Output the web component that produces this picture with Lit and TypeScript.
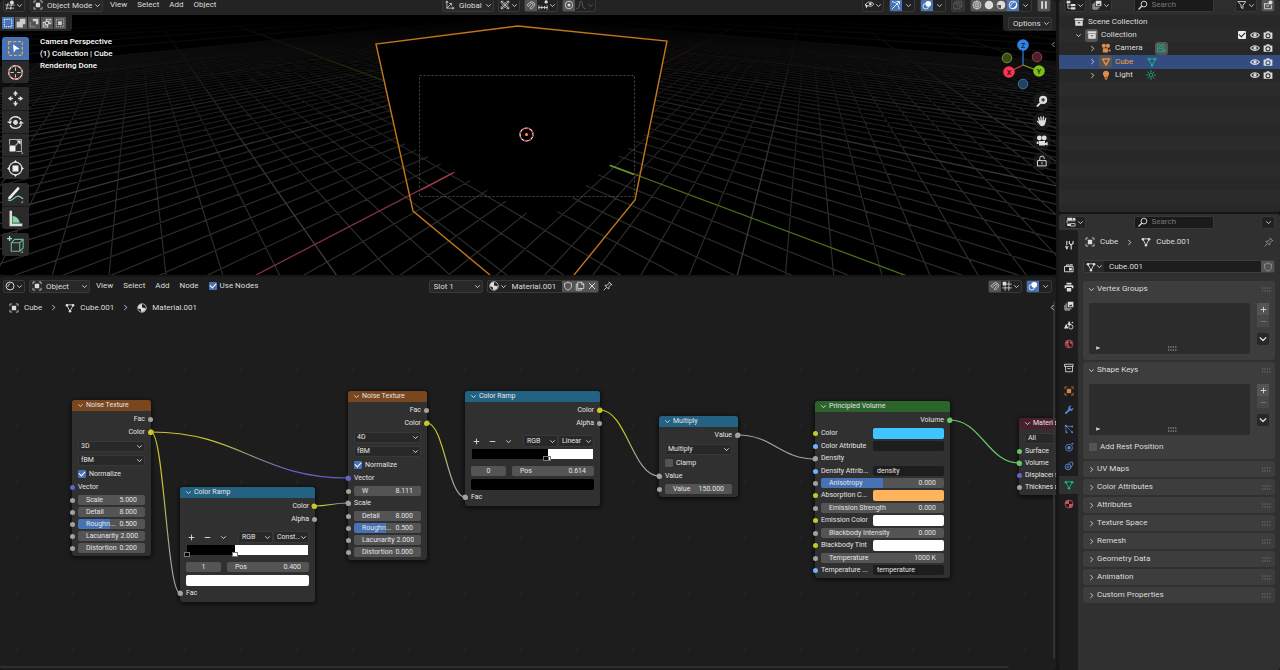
import { LitElement, html, svg, css, TemplateResult } from "lit";
import { customElement, property } from "lit/decorators.js";
import { classMap } from "lit/directives/class-map.js";

/* ---------- icons, drawn on a 16 x 16 grid ---------- */
const ln = (d: string, w = 1.4) =>
  svg`<path d=${d} fill="none" stroke="currentColor" stroke-width=${w} stroke-linecap="round" stroke-linejoin="round"></path>`;
const fl = (d: string) => svg`<path d=${d} fill="currentColor" fill-rule="evenodd"></path>`;
const ring = (x: number, y: number, r: number, w = 1.4) =>
  svg`<circle cx=${x} cy=${y} r=${r} fill="none" stroke="currentColor" stroke-width=${w}></circle>`;
const dot = (x: number, y: number, r: number) => svg`<circle cx=${x} cy=${y} r=${r} fill="currentColor"></circle>`;

const corners = ln("M1.5 4.5v-3h3M11.5 1.5h3v3M14.5 11.5v3h-3M4.5 14.5h-3v-3", 1.2);

const ICONS: Record<string, unknown> = {
  chev: ln("M3.500 6l4.500 4.500L12.500 6", 2),
  right: ln("M6 3l5 5-5 5", 2),
  left: ln("M10 3L5 8l5 5", 2),
  plus: ln("M8 2.500v11M2.500 8h11", 2),
  minus: ln("M2.500 8h11", 2),
  x: ln("M3.500 3.500l9 9M12.500 3.500l-9 9", 1.6),
  search: svg`${ring(9.5, 6.5, 4.6, 1.5)}${ln("M6 10l-4.500 4.500", 2)}`,
  viewport: svg`${ln("M1 8h14M3 13h11M5 5L2 15M10 8l-1 7", 1.3)}${dot(11, 4, 3.2)}`,
  object: svg`${corners}${fl("M4.500 4.500h7v7h-7z")}`,
  axes: svg`${ln("M3 2v11h11M3 13l7-7M1.500 4L3 1.500 4.500 4M12 11.500l2.500 1.500-2.500 1.500M7.500 5.500H10.500V8.500", 1.2)}`,
  pivot: svg`${ln("M2 2l3 3M14 2l-3 3M2 14l3-3M14 14l-3-3M2 5V2h3M11 2h3v3M2 11v3h3M11 14h3v-3", 1.2)}${ring(8, 8, 3.6, 1.3)}${dot(8, 8, 1.6)}`,
  magnet: svg`${ln("M2 8l4-4a4.600 4.600 0 0 1 6.500 6.500l-4 4-2-2 4-4a1.700 1.700 0 0 0-2.500-2.500l-4 4z", 1.3)}`,
  increment: svg`${ln("M1 12h14M1.500 9v6M6 10v4M10.500 10v4M14.500 9v6", 1.3)}${dot(13, 3, 2.6)}`,
  prop: svg`${ring(8, 8, 6, 1.3)}${dot(8, 8, 2.4)}`,
  falloff: ln("M1.500 14C7 14 5 2 8 2s1 12 6.500 12", 1.4),
  eyecur: svg`${ln("M3 6.500C5 2 13 2 15.500 6.500 13 11 9 10.500 7.500 9.500", 1.4)}${dot(10, 6.5, 2.2)}${fl("M1 6l7 3.500-3 1L4 14z")}`,
  gizmo: svg`${ln("M2 3c6 0 10 4 11 11M2 14L13 3M9.500 2.500H13.500V6.500", 1.4)}`,
  overlay: svg`${ring(6, 10, 4.4, 1.3)}${dot(10, 6, 4.6)}`,
  xray: svg`${ln("M2 5h9v9H2zM5 5V2h9v9h-3M7 7v4", 1.2)}`,
  wire: svg`${ring(8, 8, 6.3, 1.2)}${ln("M8 1.700v12.600M1.700 8h12.600M3 4.500c3 1.500 7 1.500 10 0M3 11.500c3-1.500 7-1.500 10 0M8 1.700C4 5 4 11 8 14.300M8 1.700c4 3.300 4 9.300 0 12.600", 0.9)}`,
  solid: dot(8, 8, 6.8),
  material: svg`${ring(8, 8, 6.3, 1.2)}${fl("M8 1.500a6.500 6.500 0 0 1 0 13V8H2a6 6 0 0 1 6-6.500z")}`,
  rendered: svg`${ring(8, 8, 6.2, 1.4)}${ln("M4.500 9.500A5 5 0 0 1 9.500 4", 1.3)}${fl("M13.500 4A7 7 0 0 1 4 13.500 9 9 0 0 0 13.500 4z")}`,
  pause: fl("M3.500 2h3v12h-3zM9.500 2h3v12h-3z"),
  shaderball: svg`${ring(8, 8, 6.4, 1.5)}${ln("M4.500 9A4.500 4.500 0 0 1 8 4.500", 1.3)}`,
  matball: svg`${ring(8, 8, 6.8, 1.2)}${fl("M8 1.500A6.500 6.500 0 0 0 1.500 8.500L6 10l2-3zM8 7l6 1.500A6.500 6.500 0 0 1 7 14.500L6 10z")}`,
  mesh: svg`${ln("M3 3.500L8 13.500 13 3.500z", 1.4)}${dot(3, 3.5, 2)}${dot(13, 3.5, 2)}${dot(8, 13.2, 2)}`,
  shield: ln("M8 2c2 1.200 4 1.500 5.500 1.500V8c0 3.500-3 5.500-5.500 6.500C5.500 13.500 2.500 11.500 2.500 8V3.500C4 3.500 6 3.200 8 2z", 1.3),
  copy: ln("M5 2h6l3 3v7H5zM10.500 2v3.500H14M4.500 5H2v9.500h8V12.500", 1.3),
  pin: ln("M9.500 1.500l5 5M10.500 2.500L7 6.500 3 7l6 6 .5-4 4-3.500M5.500 10.500l-4 4", 1.3),
  gridsnap: svg`${ln("M8 5h7M1 11h14M11 1v14M5 8v7", 1.3)}${fl("M1 1h6v6H1z")}`,
  tree: svg`${fl("M1 1h6v4H1zM8 6.500h7v3.500H8zM8 11.500h7V15H8z")}${ln("M3 5v8.200h5M3 8.200h5", 1.2)}`,
  layers: svg`${ln("M3.500 4.500V12.500H11.500M1.500 7v7.500H9", 1.3)}${fl("M6 1h9v9H6zM7.500 8.500h6L11.500 5 9.800 7.200 9 6.200z")}`,
  filter: ln("M2 2.500h12L9.500 8.500v5l-3-1.500V8.500z", 1.4),
  newcol: svg`${ln("M2 6h7M2.500 6v8h11V9M6 9.500h3", 1.4)}${dot(12, 4, 3.2)}`,
  archive: svg`${fl("M1 2h14v3.500H1zM2 6.500h12V14H2zM6 8.500v1.500h4V8.500z")}`,
  archiveline: ln("M1.500 2h13v3.500h-13zM2.500 5.500V14h11V5.500M6 9h4", 1.4),
  camobj: svg`${dot(4.5, 4.5, 3.4)}${dot(11, 4.5, 3.4)}${fl("M3 8.500h8V15H3zM11.500 11.500L15 9.500v5l-3.500-2z")}`,
  camline: svg`${ring(4.5, 4.5, 2.5, 1.3)}${ring(11, 4.5, 2.5, 1.3)}${ln("M3 9h8v5H3zM11 11.500L14.500 9.500v4.500z", 1.3)}`,
  tri: ln("M2.500 3L8 13 13.500 3z", 2.4),
  bulb: svg`${fl("M8 1a5 5 0 0 1 3 9v2H5v-2A5 5 0 0 1 8 1zM5.500 13h5L9 15.500H7z")}`,
  sun: svg`${ring(8, 8, 3, 1.3)}${ln("M8 1v2M8 13v2M1 8h2M13 8h2M3 3l1.500 1.500M11.500 11.500L13 13M13 3l-1.500 1.500M3 13l1.500-1.500", 1.4)}`,
  eye: svg`${ln("M1 8C3.500 3 12.500 3 15 8 12.500 13 3.500 13 1 8z", 1.7)}${dot(8, 8, 2.7)}`,
  render: svg`${fl("M1 4h4l1-2h4l1 2h4v10H1zM8 5a4 4 0 1 0 0 8 4 4 0 0 0 0-8z")}${dot(8, 9, 2.4)}`,
  props: svg`${fl("M2 1h8v4H2zM2 10.500h5V14.500H2z")}${ln("M11 3h3.500v3H1.500V9M8 10.500h6.500v4H8z", 1.3)}${dot(13, 3, 2)}`,
  tool: svg`${ln("M4.500 2V7M4.500 9.500V14M11.500 8.500V14.500M8.500 2v3.500l3 2.500 3-2.500V2", 1.8)}${ln("M2.500 10.500l2 4 2-4", 1.4)}`,
  rendertab: svg`${ln("M1.500 5.500h13V14h-13zM4 5V3h4v2", 1.5)}${fl("M8 7.500h4.500V12H8zM9 2h5v2H9z")}`,
  output: svg`${fl("M4 1h8v3H4zM1 5h14v5h-2.500V8h-9v2H1zM4.500 9.500h7V15h-7z")}`,
  scene: svg`${fl("M8 1l3.500 7h-6zM3.500 6L7 13.500H0z")}${ring(11, 11, 3.4, 1.4)}${dot(13.5, 4, 1.3)}`,
  world: svg`${ring(8, 8, 6.3, 1.3)}${fl("M3 4l4-1.500 1 3L6 8l3 3-1 3-3-3-2-3zM10 3l3 2-1 4-3-3z")}`,
  wrench: svg`${ln("M3 13L9.500 6.500", 3)}${fl("M15 4.500l-3 2-2-.5-.5-2L12 1a4.500 4.500 0 0 0-5 5.700L9.500 9.200a4.500 4.500 0 0 0 5.500-4.700z")}`,
  particles: svg`${dot(3, 3, 1.8)}${dot(13, 4, 1.6)}${dot(4, 13, 1.6)}${dot(13, 13, 1.6)}${ln("M3 3v9M4 4l8.500 8.500M4.500 3.500L12 4", 1.2)}`,
  physics: svg`${ring(8, 9, 5.6, 1.3)}${dot(8, 9, 2.8)}${dot(13.5, 2.5, 1.5)}`,
  constraint: svg`${ring(6.5, 9.5, 4.6, 1.5)}${ring(6.5, 9.5, 1.6, 1.3)}${ln("M7 4.500l3.500-2.500h3.500v4l-3 4.500", 1.5)}`,
  matred: svg`${ring(8, 8, 6.3, 1.3)}${fl("M8 1.500A6.500 6.500 0 0 0 1.500 8H8v6.500A6.500 6.500 0 0 0 14.500 8H8z")}`,
  play: fl("M3 3.500l12 4.500-12 4.500z"),
  zoom: svg`${dot(9.5, 6.5, 5.4)}${ln("M6 10.500L2 14.500", 2.6)}<path d="M9.500 4v5M7 6.500h5" stroke="#111" stroke-width="1.300"></path>`,
  hand: svg`${ln("M4.500 8L3.500 4M7 7L6.500 2.500M9.500 7l.5-4.500M12 8l1-3.500M2 8.500l3 3", 1.8)}${fl("M4 7h9c0 4-1.500 8-5 8-2 0-3-1.500-4-4z")}`,
  cam: svg`${dot(4.5, 4, 3.2)}${dot(11, 4, 3.2)}${fl("M4 8h8v6H4zM12 11l3.500-2v5L12 13zM1 8.500h2.500V12H1z")}`,
  lock: svg`${ln("M2.500 7.500h11v7h-11zM5 7.500V4.500a3 3 0 0 1 6 0V5", 1.3)}${ln("M8 10v2", 1.3)}`,
};

const icon = (name: string, cls = ""): TemplateResult =>
  html`<svg class="ic ${cls}" viewBox="0 0 16 16" aria-hidden="true">${ICONS[name]}</svg>`;

const grip = html`<svg class="grip" viewBox="0 0 9 5" aria-hidden="true"><path d="M0 1h9M0 4h9" fill="none" stroke="currentColor" stroke-dasharray="1.200 1.200"></path></svg>`;

/* ---------- styles shared by every element ---------- */
const base = css`
  * { box-sizing: border-box; }
  button, input, select { font: inherit; color: inherit; margin: 0; padding: 0; border: 0; background: none; border-radius: 0; }
  select { appearance: none; outline: 0; }
  button { display: inline-flex; align-items: center; justify-content: center; }
  .ic { width: 10px; height: 10px; flex: none; display: block; overflow: visible; }
  .ic.s { width: 7px; height: 7px; }
  .ic.l { width: 12px; height: 12px; }
  .row { display: flex; align-items: center; }
  .grp { display: flex; align-items: center; height: 13px; border: 1px solid #383838; border-radius: 2px; background: #222; overflow: hidden; flex: none; }
  .grp > button { height: 12px; width: 12px; }
  .grp > button.wide { width: 20px; gap: 1px; }
  .on { background: #4772b3; color: #fff; }
  .grey { background: #545454; }
  .dim { opacity: 0.35; }
  .pick { display: flex; align-items: center; height: 13px; border: 1px solid #383838; border-radius: 2px; background: #282828; padding: 0 1px 0 2px; flex: none; }
  .pick > .ic:first-child { margin-right: 4px; }
  .pick select { flex: 1; min-width: 0; height: 100%; }
  .check { display: inline-flex; align-items: center; gap: 3px; }
  .check input { appearance: none; width: 8px; height: 8px; border-radius: 1px; background: #545454; flex: none; display: grid; place-items: center; }
  .check input:checked { background: #4772b3; }
  .check input:checked::after { content: ""; width: 5px; height: 3px; border-left: 1px solid #fff; border-bottom: 1px solid #fff; rotate: -45deg; translate: 0 -1px; }
`;

const pick = (value: string, label: string, ic = "", cls = "") => html`
  <label class="pick ${cls}">${ic ? icon(ic) : ""}<select aria-label=${label}><option>${value}</option></select>${icon("chev", "s")}</label>`;

/* ---------- perspective scene behind the 3D viewport ---------- */
@customElement("viewport-scene")
export class ViewportScene extends LitElement {
  static styles = css`
    :host { display: block; position: absolute; inset: 0; }
    svg { display: block; width: 100%; height: 100%; }
  `;

  private readonly focal = 298;
  private readonly dist = 15.94;
  private readonly a = 0.6465;
  private readonly b = 0.763;
  private readonly sinE = 0.439;
  private readonly cosE = 0.8985;

  private project(x: number, y: number): [number, number] {
    const depth = this.dist - this.cosE * (this.b * x + this.a * y);
    const sx = 527 + (this.focal * (this.b * y - this.a * x)) / depth;
    const sy = 134.6 + (this.focal * this.sinE * (this.b * x + this.a * y)) / depth;
    return [+sx.toFixed(1), +sy.toFixed(1)];
  }

  private gridPath(filter: (i: number) => boolean, range: number): string {
    let d = "";
    const near = this.dist - 1;
    for (let i = -range; i <= range; i++) {
      if (!filter(i)) continue;
      const yMax = Math.min(range, (near / this.cosE - this.b * i) / this.a);
      const xMax = Math.min(range, (near / this.cosE - this.a * i) / this.b);
      if (yMax > -range) d += `M${this.project(i, -range)}L${this.project(i, yMax)}`;
      if (xMax > -range) d += `M${this.project(-range, i)}L${this.project(xMax, i)}`;
    }
    return d;
  }

  render() {
    const minor = this.gridPath((i) => i % 10 !== 0, 50);
    const major = this.gridPath((i) => i % 10 === 0 && i !== 0, 100);
    return html`<svg viewBox="0 15 1056 260" preserveAspectRatio="xMidYMin slice" aria-hidden="true">
      <defs>
        <linearGradient id="fade" gradientUnits="userSpaceOnUse" x1="0" y1="18" x2="0" y2="275">
          <stop offset="0" stop-color="#000"></stop>
          <stop offset="0.12" stop-color="#3a3a3a"></stop>
          <stop offset="0.35" stop-color="#a0a0a0"></stop>
          <stop offset="0.7" stop-color="#fff"></stop>
        </linearGradient>
        <mask id="haze" maskUnits="userSpaceOnUse" x="0" y="15" width="1056" height="260">
          <rect x="0" y="15" width="1056" height="260" fill="url(#fade)"></rect>
        </mask>
      </defs>
      <rect y="15" width="1056" height="260" fill="#000"></rect>
      <g mask="url(#haze)" fill="none">
        <path d=${minor} stroke="#2c2c2c" stroke-width="1.200"></path>
        <path d=${major} stroke="#3c3c3c" stroke-width="1.300"></path>
        <path d="M256 275L740 24" stroke="#84303f" stroke-width="1.300"></path>
        <path d="M232 24L907 276" stroke="#4b6e1c" stroke-width="1.300"></path>
      </g>
      <path d="M376 44L518 26 667 41 649 130 544 223 397 139z" fill="#000"></path>
      <path d="M453 173L421 190" stroke="#a43b4e" stroke-width="1.400"></path>
      <path d="M610 165.500L634 174.500" stroke="#6b9424" stroke-width="1.400"></path>
      <path d="M490 275L413 211 376 44 518 26 667 41 635 200 574 275" fill="none" stroke="#c2761a" stroke-width="1.400"></path>
      <rect x="419.500" y="75.500" width="215" height="121" fill="none" stroke="#4a4a4a" stroke-dasharray="2 2"></rect>
      <circle cx="526.500" cy="134.500" r="6.500" fill="none" stroke="#fff" stroke-width="1.200"></circle>
      <circle cx="526.500" cy="134.500" r="6.500" fill="none" stroke="#d22" stroke-width="1.200" stroke-dasharray="2.550 2.550"></circle>
      <circle cx="526.500" cy="134.500" r="1.500" fill="#ff9a2e"></circle>
    </svg>`;
  }
}

/* ---------- shader nodes ---------- */
type Row = {
  kind: "out" | "plain" | "select" | "check" | "num" | "swatch" | "text" | "ramp";
  label?: string;
  value?: string;
  sock?: string;
  fill?: number;
  on?: boolean;
  mode?: string;
  index?: string;
  pos?: string;
  stops?: number[];
};
type NodeData = { title: string; x: number; y: number; w: number; head: string; tight?: boolean; rows: Row[] };

const G = "#a1a1a1", Y = "#c7c729", V = "#6363c7", S = "#70b2ff", SH = "#63c763";

const noise = (x: number, y: number, dim: string, tail: Row[]): NodeData => ({
  title: "Noise Texture", x, y, w: 79, head: "#79461d",
  rows: [
    { kind: "out", label: "Fac", sock: G },
    { kind: "out", label: "Color", sock: Y },
    { kind: "select", value: dim, label: "Dimensions" },
    { kind: "select", value: "fBM", label: "Type" },
    { kind: "check", label: "Normalize", on: true },
    { kind: "plain", label: "Vector", sock: V },
    ...tail,
  ],
});
const num = (label: string, value: string, fill?: number): Row => ({ kind: "num", label, value, sock: G, fill });
const ramp = (x: number, y: number, mode: string, index: string, pos: string, stops: number[], value: string): NodeData => ({
  title: "Color Ramp", x, y, w: 135, head: "#246283",
  rows: [
    { kind: "out", label: "Color", sock: Y },
    { kind: "out", label: "Alpha", sock: G },
    { kind: "ramp", mode, index, pos, stops, value },
    { kind: "plain", label: "Fac", sock: G },
  ],
});

const NODES: NodeData[] = [
  noise(72, 80, "3D", [num("Scale", "5.000"), num("Detail", "8.000"), num("Roughn...", "0.500", 48), num("Lacunarity", "2.000"), num("Distortion", "0.200")]),
  ramp(180, 167, "Const...", "1", "0.400", [0, 40], "#ffffff"),
  noise(348, 71, "4D", [num("W", "8.111"), { kind: "plain", label: "Scale", sock: G }, num("Detail", "8.000"), num("Roughn...", "0.500", 48), num("Lacunarity", "2.000"), num("Distortion", "0.000")]),
  ramp(465, 71, "Linear", "0", "0.614", [61, 63], "#000000"),
  {
    title: "Multiply", x: 659, y: 96, w: 79, head: "#246283",
    rows: [
      { kind: "out", label: "Value", sock: G },
      { kind: "select", value: "Multiply", label: "Operation" },
      { kind: "check", label: "Clamp", on: false },
      { kind: "plain", label: "Value", sock: G },
      num("Value", "150.000"),
    ],
  },
  {
    title: "Principled Volume", x: 815, y: 81, w: 135, head: "#2b652b",
    rows: [
      { kind: "out", label: "Volume", sock: SH },
      { kind: "swatch", label: "Color", value: "#40c4ff", sock: Y },
      { kind: "text", label: "Color Attribute", value: "", sock: S },
      { kind: "plain", label: "Density", sock: G },
      { kind: "text", label: "Density Attrib...", value: "density", sock: S },
      num("Anisotropy", "0.000", 50),
      { kind: "swatch", label: "Absorption C...", value: "#ffb35c", sock: Y },
      num("Emission Strength", "0.000"),
      { kind: "swatch", label: "Emission Color", value: "#ffffff", sock: Y },
      num("Blackbody Intensity", "0.000"),
      { kind: "swatch", label: "Blackbody Tint", value: "#ffffff", sock: Y },
      num("Temperature", "1000 K"),
      { kind: "text", label: "Temperature ...", value: "temperature", sock: S },
    ],
  },
  {
    title: "Material Output", x: 1019, y: 98, w: 79, head: "#4a1f2c", tight: true,
    rows: [
      { kind: "select", value: "All", label: "Target" },
      { kind: "plain", label: "Surface", sock: SH },
      { kind: "plain", label: "Volume", sock: SH },
      { kind: "plain", label: "Displacement", sock: V },
      { kind: "plain", label: "Thickness", sock: G },
    ],
  },
];

@customElement("shader-node")
export class ShaderNode extends LitElement {
  @property({ attribute: false }) data!: NodeData;

  static styles = [base, css`
    :host { display: block; }
    .node { background: #303030; border-radius: 3px; box-shadow: 0 1px 4px 1px rgba(0, 0, 0, 0.6); font-size: 7px; line-height: 9px; color: #e4e4e4; }
    .head { height: 11px; padding: 0 5px; gap: 2px; border-radius: 3px 3px 0 0; overflow: hidden; white-space: nowrap; }
    .body { padding: 2px 0; }
    .r { position: relative; display: flex; align-items: center; height: 12px; padding: 0 6px; white-space: nowrap; }
    .out, .plain, .swatch { height: 13px; }
    .tight .plain { height: 12px; }
    .out { justify-content: flex-end; }
    .select, .check-row { height: 14px; }
    .sock { position: absolute; width: 5px; height: 5px; border-radius: 50%; left: -2px; }
    .out .sock { left: auto; right: -2px; }
    .r .pick { flex: 1; height: 11px; }
    .num label { flex: 1; min-width: 0; display: flex; align-items: center; justify-content: space-between; height: 10px; border-radius: 2px; padding: 0 8px; background: linear-gradient(90deg, #4772b3 var(--fill, 0%), #545454 0); }
    .num input { text-align: right; flex: none; }
    .pair { flex: 1; min-width: 0; display: grid; grid-template-columns: 52px 1fr; align-items: center; }
    .pair input { width: 100%; height: 10px; border-radius: 2px; background: #1d1d1d; padding: 0 4px; }
    .chip { display: flex; height: 11px; border-radius: 2px; width: 100%; }
    .ramp { padding: 4px 6px 1px; }
    .tools { height: 14px; gap: 8px; padding-left: 1px; }
    .tools button { width: 8px; height: 10px; }
    .tools .duo { display: grid; grid-template-columns: 35px 36px; margin-left: auto; }
    .tools .pick { padding: 0 1px 0 3px; height: 12px; }
    .bar { position: relative; height: 12px; margin: 1px 1px 0; }
    .grad { height: 10px; display: flex; background: #000; }
    .grad i { margin-left: auto; background: #fff; }
    .stop { position: absolute; bottom: 0; width: 6px; height: 5px; margin-left: -3px; border: 1px solid #777; background: #000; }
    .stop.w { background: #fff; }
    .stop:not(.w) { z-index: 1; }
    .fields { margin-top: 5px; gap: 6px; }
    .fields label { display: flex; align-items: center; justify-content: space-between; height: 10px; border-radius: 2px; background: #545454; padding: 0 8px; flex: 1; min-width: 0; }
    .fields label.idx { flex: none; width: 35px; padding: 0; }
    .fields input { width: 30px; min-width: 0; text-align: right; }
    .fields .idx input { width: 100%; text-align: center; }
    .ramp .chip { margin-top: 3px; }
  `];

  private row(r: Row): TemplateResult {
    const sock = r.sock ? html`<i class="sock" style="background:${r.sock}"></i>` : "";
    switch (r.kind) {
      case "out":
        return html`<div class="r out">${r.label}${sock}</div>`;
      case "plain":
        return html`<div class="r plain">${sock}${r.label}</div>`;
      case "select":
        return html`<div class="r select">${pick(r.value!, r.label!)}</div>`;
      case "check":
        return html`<div class="r check-row"><label class="check"><input type="checkbox" .checked=${!!r.on} />${r.label}</label></div>`;
      case "num":
        return html`<div class="r num">${sock}<label style="--fill:${r.fill ?? 0}%"><span>${r.label}</span><input style="width:${r.value!.length}ch" .value=${r.value!} /></label></div>`;
      case "swatch":
        return html`<div class="r swatch">${sock}<div class="pair"><span>${r.label}</span><button class="chip" aria-label=${r.label!} style="background:${r.value}"></button></div></div>`;
      case "text":
        return html`<div class="r">${sock}<label class="pair"><span>${r.label}</span><input .value=${r.value!} /></label></div>`;
      default:
        return html`<div class="ramp">
          <div class="row tools">
            <button aria-label="Add stop">${icon("plus", "s")}</button>
            <button aria-label="Delete stop">${icon("minus", "s")}</button>
            <button aria-label="Ramp tools">${icon("chev", "s")}</button>
            <div class="duo">${pick("RGB", "Color mode")}${pick(r.mode!, "Interpolation")}</div>
          </div>
          <div class="bar">
            <div class="grad"><i style="width:${100 - r.stops![1]}%"></i></div>
            ${r.stops!.map((s, i) => html`<i class="stop ${i ? "w" : ""}" style="left:${s}%"></i>`)}
          </div>
          <div class="row fields">
            <label class="idx"><input aria-label="Stop" .value=${r.index!} /></label>
            <label><span>Pos</span><input .value=${r.pos!} /></label>
          </div>
          <button class="chip" aria-label="Stop color" style="background:${r.value}"></button>
        </div>`;
    }
  }

  render() {
    const n = this.data;
    return html`<div class=${classMap({ node: true, tight: !!n.tight })}>
      <div class="row head" style="background:${n.head}">${icon("chev", "s")}<span>${n.title}</span></div>
      <div class="body">${n.rows.map((r) => this.row(r))}</div>
    </div>`;
  }
}

type Wire = [number, number, number, number, string, string];
const WIRES: Wire[] = [
  [151, 112, 348, 158, Y, V],
  [151, 112, 180, 273, Y, G],
  [314, 186, 348, 183, Y, G],
  [427, 103, 465, 177, Y, G],
  [600, 90, 659, 156, Y, G],
  [738, 115, 815, 139, G, G],
  [950, 100, 1019, 143, SH, SH],
];

/* ---------- application ---------- */
@customElement("app-root")
export class AppRoot extends LitElement {
  static styles = [base, css`
    :host { display: grid; grid-template-columns: minmax(0, 1fr) 221px; column-gap: 3px; height: 100vh; overflow: hidden; background: #161616; color: #dcdcdc; font: 400 8px/12px Roboto, "Liberation Sans", sans-serif; }
    main { display: grid; grid-template-rows: 275px minmax(0, 1fr); row-gap: 2px; min-width: 0; }
    aside { display: grid; grid-template-rows: 212px minmax(0, 1fr); row-gap: 2px; min-width: 0; }
    section { display: flex; flex-direction: column; min-width: 0; min-height: 0; overflow: hidden; border-radius: 3px; }

    .view { background: #000; }
    .bar { background: #232323; height: 20px; margin-top: -5px; padding: 0 5px 0 3px; display: grid; grid-template-columns: 1fr auto 1fr; align-items: center; flex: none; }
    .bar > div { gap: 5px; }
    .end { justify-content: flex-end; }
    .bar .mid { gap: 4px; padding-right: 16px; }
    .menus { gap: 10px; padding-left: 2px; }
    a { color: inherit; text-decoration: none; }
    .mode { width: 73px; }
    .global { width: 52px; }
    .stage { position: relative; flex: 1; min-height: 0; }
    .corner { position: absolute; top: 0; left: 0; height: 16px; background: #232323; padding: 0 5px 0 2px; border-radius: 0 0 3px 0; }
    .corner.opt { left: auto; right: 0; padding: 0 4px 0 5px; border-radius: 0 0 0 3px; }
    .corner .pick { width: 44px; padding-left: 4px; }
    .selset { display: flex; }
    .selset button { width: 12px; height: 12px; background: #545454; margin-right: 1px; color: #ccc; }
    .selset button.on { background: #4772b3; color: #fff; }
    .tools { position: absolute; left: 2px; top: 22px; width: 27px; display: grid; gap: 4px; }
    .tools div { display: grid; border-radius: 3px; overflow: hidden; }
    .tools button { width: 100%; height: 23px; background: #2a2a2a; color: #ddd; }
    .tools button + button { border-top: 1px solid #1a1a1a; }
    .tools button.on { background: #4772b3; }
    .tools svg { width: 17px; height: 17px; display: block; }
    .info { position: absolute; left: 40px; top: 21px; color: #fff; font-weight: 500; }
    .info div { height: 12px; }
    .giz { position: absolute; right: 11px; top: 24px; width: 46px; height: 52px; }
    .giz text { font-size: 7px; font-weight: 700; text-anchor: middle; }
    .nav { position: absolute; right: 5px; top: 77px; display: grid; gap: 2px; color: #ddd; }
    .nav button { width: 18px; height: 18px; border-radius: 50%; background: rgba(30, 30, 30, 0.7); }
    .tog { position: absolute; right: -1px; top: 26px; color: #aaa; }

    .nodes { background: #1d1d1d; position: relative; }
    .nbar { height: 18px; padding: 0 4px 0 3px; display: grid; grid-template-columns: 1fr auto 1fr; align-items: center; flex: none; }
    .nbar > div { gap: 4px; }
    .nbar .mid { padding-right: 14px; }
    .nmode { width: 61px; }
    .slot { width: 54px; padding-left: 4px; }
    .matname { width: 54px; height: 13px; padding-left: 4px; }
    .crumbs { height: 25px; padding-left: 9px; gap: 5px; flex: none; }
    .crumbs .s { margin: 0 3px; }
    .canvas { position: relative; flex: 1; overflow: hidden; background: radial-gradient(circle, #262626 1px, transparent 1px) 45px 22px / 56px 56px; }
    .canvas shader-node { position: absolute; }
    .wires { position: absolute; inset: 0; width: 100%; height: 100%; pointer-events: none; }
    .vs { position: absolute; right: 1px; top: 24px; bottom: 11px; width: 2px; background: #333; border-radius: 1px; }
    .hs { position: absolute; left: 0; right: 47px; bottom: 2px; height: 2px; background: #2e2e2e; border-radius: 1px; }
    .region { position: absolute; right: 0; top: 27px; }

    .outliner { background: #282828; }
    .obar { height: 20px; margin-top: -5px; background: #2d2d2d; padding: 0 5px; gap: 4px; flex: none; }
    .field { display: flex; align-items: center; gap: 4px; height: 13px; background: #1a1a1a; border: 1px solid #383838; border-radius: 2px; padding: 0 3px; width: 80px; }
    .field input { flex: 1; min-width: 0; }
    .field input::placeholder { color: #777; opacity: 1; }
    .obar .field { margin: 0 auto; }
    .rows { flex: 1; background: repeating-linear-gradient(#282828 0 13px, #2b2b2b 13px 27px); }
    .list { display: grid; grid-template-rows: repeat(5, minmax(0, 1fr)); height: 67px; }
    .item { display: flex; align-items: center; gap: 4px; padding: 0 7px 0 15px; min-height: 0; }
    .item.sel { background: #334d80; }
    .item .ends { margin-left: auto; display: flex; gap: 3px; align-items: center; }
    .item.l1 { padding-left: 16px; gap: 3px; }
    .item.l2 { padding-left: 30px; gap: 3px; }
    .tag { display: grid; place-items: center; width: 13px; height: 13px; border-radius: 3px; }
    .tag.lit { background: #555; }
    .tag.kind { margin-left: 9px; }
    .item .check { margin-right: 1px; }
    .item .check input { background: #eee; }
    .item .check input::after { border-color: #222; }
    .or { color: #e08a4c; }
    .gr { color: #19b48c; }
    .cubename { color: #f0a23c; }

    .properties { background: #303030; }
    .pbar { height: 16px; padding: 0 5px; justify-content: space-between; flex: none; }
    .pbody { display: grid; grid-template-columns: 19px minmax(0, 1fr); flex: 1; min-height: 0; }
    .tabs { background: #1d1d1d; display: flex; flex-direction: column; gap: 5px; padding-top: 5px; border-radius: 0 3px 0 0; }
    .tabs div { display: grid; grid-auto-rows: 1fr; }
    .tabs .t1 { height: 19px; }
    .tabs .t5 { height: 94px; }
    .tabs .t7 { height: 131px; }
    .tabs button { width: 19px; }
    .tabs button.cur { background: #303030; }
    .panels { padding: 0 5px; display: flex; flex-direction: column; gap: 2px; min-width: 0; }
    .path { height: 24px; gap: 5px; padding-left: 2px; }
    .path .s { margin: 0 3px; }
    .path .pin { margin-left: auto; margin-right: 1px; color: #999; }
    .datablock { height: 13px; margin: 4px 0 6px; border: 1px solid #3d3d3d; border-radius: 2px; background: #1d1d1d; overflow: hidden; flex: none; }
    .datablock .drop { width: 20px; height: 13px; background: #282828; }
    .datablock input { flex: 1; min-width: 0; padding: 0 5px; }
    .datablock .sh { width: 13px; height: 13px; background: #545454; color: #999; }
    .panel { background: #3d3d3d; border-radius: 3px; }
    .panel > header { height: 16px; padding: 0 4px 0 5px; gap: 2px; display: flex; align-items: center; }
    .grip { margin-left: auto; width: 9px; height: 5px; color: #777; }
    .lb { display: grid; grid-template-columns: minmax(0, 1fr) 12px; gap: 7px; padding: 6px; }
    .box { height: 51px; background: #2c2c2c; border-radius: 2px; display: flex; align-items: flex-end; padding: 0 6px 3px; color: #ccc; }
    .box .ic { width: 6px; height: 6px; }
    .box .grip { margin: 0 auto; color: #bbb; }
    .side button { display: flex; width: 12px; height: 12px; background: #545454; }
    .side .off { background: #484848; color: #777; }
    .side .more { background: #282828; margin-top: 6px; border-radius: 2px; }
    .rest { padding: 0 6px 6px; }
    .rest .check { display: flex; }
    .blue { color: #5b85d8; }
    .red { color: #c7525c; }
    .orange { color: #d5843f; }
  `];

  private header() {
    return html`<header class="bar">
      <div class="row">
        <div class="grp"><button class="wide" aria-label="Editor type">${icon("viewport")}${icon("chev", "s")}</button></div>
        ${pick("Object Mode", "Mode", "object", "mode")}
        <nav class="row menus">${["View", "Select", "Add", "Object"].map((m) => html`<a href="#">${m}</a>`)}</nav>
      </div>
      <div class="row mid">
        ${pick("Global", "Orientation", "axes", "global")}
        <div class="grp"><button class="wide" aria-label="Pivot point">${icon("pivot")}${icon("chev", "s")}</button></div>
        <div class="grp"><button class="grey" aria-label="Snap">${icon("magnet")}</button><button class="wide" aria-label="Snap to">${icon("increment")}${icon("chev", "s")}</button></div>
        <div class="grp"><button class="grey" aria-label="Proportional editing">${icon("prop")}</button><button class="wide dim" aria-label="Falloff">${icon("falloff")}${icon("chev", "s")}</button></div>
      </div>
      <div class="row end">
        <div class="grp"><button class="wide" aria-label="Visibility">${icon("eyecur")}${icon("chev", "s")}</button></div>
        <div class="grp"><button class="on" aria-label="Gizmos">${icon("gizmo")}</button><button aria-label="Gizmo options">${icon("chev", "s")}</button></div>
        <div class="grp"><button class="on" aria-label="Overlays">${icon("overlay")}</button><button aria-label="Overlay options">${icon("chev", "s")}</button></div>
        <div class="grp"><button class="grey dim" aria-label="X-ray">${icon("xray")}</button></div>
        <div class="grp">
          <button class="grey" aria-label="Wireframe">${icon("wire")}</button><button class="grey" aria-label="Solid">${icon("solid")}</button><button class="grey" aria-label="Material preview">${icon("material")}</button><button class="on" aria-label="Rendered">${icon("rendered")}</button><button aria-label="Shading options">${icon("chev", "s")}</button>
        </div>
        <div class="grp"><button class="grey" aria-label="Pause">${icon("pause")}</button></div>
      </div>
    </header>`;
  }

  private toolbar() {
    const tail = svg`<path d="M19 20h-3l3-3z" fill="#888"></path>`;
    const t = (name: string, body: unknown, on = false) =>
      html`<button class=${on ? "on" : ""} aria-label=${name}><svg viewBox="0 0 20 20" aria-hidden="true">${body}</svg></button>`;
    return html`<div class="tools">
      <div>
        ${t("Select box", svg`<rect x="2" y="2" width="16" height="16" fill="none" stroke="#f0a848" stroke-width="1.500" stroke-dasharray="3.500 2"></rect><path d="M7 5l8 5.500-4.500.8L8 15z" fill="#fff"></path>`, true)}
        ${t("Cursor", svg`<circle cx="10" cy="10" r="8" fill="none" stroke="#ddd" stroke-width="1.600"></circle><circle cx="10" cy="10" r="8" fill="none" stroke="#c55" stroke-width="1.600" stroke-dasharray="3 3.300"></circle><path d="M10 4v4M10 12v4M4 10h4M12 10h4" stroke="#ccc" stroke-width="1.200"></path>`)}
      </div>
      <div>
        ${t("Move", svg`<path d="M10 1l3 4H7zM10 19l3-4H7zM1 10l4-3v6zM19 10l-4-3v6z" fill="#ddd"></path><path d="M10 4v3M10 13v3M4 10h3M13 10h3" stroke="#ddd" stroke-width="1.600"></path>`)}
        ${t("Rotate", svg`<circle cx="10" cy="10" r="2.800" fill="#ddd"></circle><path d="M3 8A7.500 7.500 0 0 1 16.500 7M17 12A7.500 7.500 0 0 1 3.500 13" fill="none" stroke="#ddd" stroke-width="1.600"></path><path d="M0 9l6-1-2 4zM20 11l-6 1 2-4z" fill="#ddd"></path>`)}
        ${t("Scale", svg`<path d="M3 9V3h14v14h-6M10 10l5-5" fill="none" stroke="#aaa" stroke-width="1.300"></path><path d="M3 10h7v7H3zM16 4v5l-5-5z" fill="#eee"></path>${tail}`)}
        ${t("Transform", svg`<circle cx="10" cy="10" r="7.500" fill="none" stroke="#ccc" stroke-width="1.500"></circle><path d="M6.500 6.500h7v7h-7zM10 0l2 3H8zM10 20l2-3H8zM0 10l3-2v4zM20 10l-3-2v4z" fill="#eee"></path>`)}
      </div>
      <div>
        ${t("Annotate", svg`<path d="M3 14L13 3" stroke="#eee" stroke-width="3.200" stroke-linecap="round"></path><path d="M1 16c5 5 8-6 13-4 2 1 3 2 5 3" fill="none" stroke="#7fcf9f" stroke-width="1.500"></path>${tail}`)}
        ${t("Measure", svg`<path d="M3 1h3v15h12v3H3z" fill="#ddd"></path><path d="M6.500 7A9 9 0 0 1 15 15H6.500z" fill="#7fd6a4"></path>`)}
      </div>
      <div>
        ${t("Add cube", svg`<path d="M5 8h10v10H5zM5 8l4-4h10v10l-4 4M15 8l4-4" fill="none" stroke="#6fb892" stroke-width="1.300"></path><path d="M3 0v6M0 3h6" stroke="#9fe6bf" stroke-width="1.500"></path>${tail}`)}
      </div>
    </div>`;
  }

  private viewport() {
    const set = [
      svg`<rect x="2" y="2" width="12" height="12" fill="none" stroke="currentColor" stroke-width="1.600" stroke-dasharray="2 1.500"></rect>`,
      svg`<path d="M6 1h9v9h-4v5H1V6h5z" fill="currentColor"></path>`,
      svg`<path d="M6 1h9v9h-4V5H6z" fill="currentColor"></path><path d="M2 7v7h8" fill="none" stroke="currentColor" stroke-width="1.300" stroke-dasharray="2 1.500"></path>`,
      svg`<path d="M1 6h5V1h9v9h-5v5H1zM6.500 6.500v3h3v-3z" fill="currentColor" fill-rule="evenodd"></path><path d="M3.500 8v5H8M8 3.500h5V8" fill="none" stroke="#545454" stroke-width="1.500"></path>`,
      svg`<rect x="2" y="2" width="12" height="12" fill="none" stroke="currentColor" stroke-width="1.300" stroke-dasharray="2 1.500"></rect><path d="M5 5h6v6H5z" fill="currentColor"></path>`,
    ];
    return html`<section class="view">
      ${this.header()}
      <div class="stage">
        <viewport-scene></viewport-scene>
        <div class="row corner"><div class="selset">${set.map((s, i) => html`<button class=${i ? "" : "on"} aria-label="Selection mode ${i + 1}"><svg class="ic" viewBox="0 0 16 16">${s}</svg></button>`)}</div></div>
        <div class="row corner opt">${pick("Options", "Options")}</div>
        ${this.toolbar()}
        <div class="info"><div>Camera Perspective</div><div>(1) Collection | Cube</div><div>Rendering Done</div></div>
        <svg class="giz" viewBox="0 0 46 52" role="img" aria-label="View axes">
          <path d="M24 26V6" stroke="#2f83e3" stroke-width="1.200"></path>
          <path d="M24 26L10 33" stroke="#c13a4a" stroke-width="1.200"></path>
          <path d="M24 26l16 6" stroke="#7fa81a" stroke-width="1.200"></path>
          <circle cx="8" cy="19" r="4.800" fill="#3b4a18" stroke="#6f9420"></circle>
          <circle cx="38" cy="18" r="4.800" fill="#4d1f28" stroke="#96394a"></circle>
          <circle cx="24" cy="45" r="4.800" fill="#24405f" stroke="#3a6ea8"></circle>
          <circle cx="24" cy="6" r="5.800" fill="#2f83e3"></circle>
          <circle cx="10" cy="33" r="5.800" fill="#f63652"></circle>
          <circle cx="40" cy="32" r="5.800" fill="#7fbf1a"></circle>
          <text x="24" y="9" fill="#0d2947">Z</text><text x="10" y="36" fill="#4d0a16">X</text><text x="40" y="35" fill="#223a00">Y</text>
        </svg>
        <div class="nav">${[["zoom", "Zoom"], ["hand", "Pan"], ["cam", "Camera view"], ["lock", "Lock camera"]].map(([i, l]) => html`<button aria-label=${l}>${icon(i, "l")}</button>`)}</div>
        <span class="tog">${icon("left", "s")}</span>
      </div>
    </section>`;
  }

  private nodeEditor() {
    return html`<section class="nodes">
      <header class="nbar">
        <div class="row">
          <div class="grp"><button class="wide" aria-label="Editor type">${icon("shaderball")}${icon("chev", "s")}</button></div>
          ${pick("Object", "Shader type", "object", "nmode")}
          <nav class="row menus">${["View", "Select", "Add", "Node"].map((m) => html`<a href="#">${m}</a>`)}
            <label class="check"><input type="checkbox" .checked=${true} />Use Nodes</label></nav>
        </div>
        <div class="row mid">
          ${pick("Slot 1", "Slot", "", "slot")}
          <div class="grp">
            <button class="wide" aria-label="Browse material">${icon("matball")}${icon("chev", "s")}</button>
            <input class="matname" aria-label="Material name" .value=${"Material.001"} />
            <button class="grey" aria-label="Fake user">${icon("shield")}</button><button class="grey" aria-label="New material">${icon("copy")}</button><button class="grey" aria-label="Unlink">${icon("x")}</button>
          </div>
          ${icon("pin")}
        </div>
        <div class="row end">
          <div class="grp"><button class="grey" aria-label="Snap">${icon("magnet")}</button><button class="wide" aria-label="Snap to">${icon("gridsnap")}${icon("chev", "s")}</button></div>
          <div class="grp"><button class="on" aria-label="Overlays">${icon("overlay")}</button><button aria-label="Overlay options">${icon("chev", "s")}</button></div>
        </div>
      </header>
      <nav class="row crumbs">${icon("object")}<span>Cube</span>${icon("right", "s")}${icon("mesh")}<span>Cube.001</span>${icon("right", "s")}${icon("matball")}<span>Material.001</span></nav>
      <div class="canvas">
        ${NODES.map((n) => html`<shader-node .data=${n} style="left:${n.x}px;top:${n.y}px;width:${n.w}px"></shader-node>`)}
        <svg class="wires" aria-hidden="true">
          <defs>${WIRES.map(([x1, y1, x2, y2, c1, c2], i) => svg`<linearGradient id="w${i}" gradientUnits="userSpaceOnUse" x1=${x1} y1=${y1} x2=${x2} y2=${y2}><stop offset="0.3" stop-color=${c1}></stop><stop offset="0.7" stop-color=${c2}></stop></linearGradient>`)}</defs>
          ${WIRES.map(([x1, y1, x2, y2], i) => {
            const h = (x2 - x1) * 0.45;
            return svg`<path d="M${x1} ${y1}C${x1 + h} ${y1} ${x2 - h} ${y2} ${x2} ${y2}" fill="none" stroke="url(#w${i})" stroke-width="1.200"></path>`;
          })}
          ${WIRES.map(([x1, y1, x2, y2, c1, c2]) => svg`<circle cx=${x1} cy=${y1} r="2.500" fill=${c1}></circle><circle cx=${x2} cy=${y2} r="2.500" fill=${c2}></circle>`)}
        </svg>
      </div>
      <i class="vs"></i><i class="hs"></i><span class="region">${icon("left", "s")}</span>
    </section>`;
  }

  private outliner() {
    const ends = html`${icon("eye")}${icon("render")}`;
    return html`<section class="outliner">
      <header class="row obar">
        <div class="grp"><button class="wide" aria-label="Editor type">${icon("tree")}${icon("chev", "s")}</button></div>
        <div class="grp"><button class="wide" aria-label="Display mode">${icon("layers")}${icon("chev", "s")}</button></div>
        <label class="field">${icon("search")}<input placeholder="Search" aria-label="Search outliner" /></label>
        <div class="grp"><button class="wide" aria-label="Filter">${icon("filter")}${icon("chev", "s")}</button></div>
        <div class="grp"><button class="grey" aria-label="New collection">${icon("newcol")}</button></div>
      </header>
      <div class="rows"><div class="list">
        <div class="item">${icon("archive")}<span>Scene Collection</span></div>
        <div class="item l1">${icon("chev", "s")}<span class="tag lit">${icon("archive")}</span><span>Collection</span>
          <span class="ends"><label class="check"><input type="checkbox" aria-label="Enable collection" .checked=${true} /></label>${ends}</span></div>
        <div class="item l2">${icon("right", "s")}<span class="tag or">${icon("camobj")}</span><span>Camera</span><span class="tag lit kind gr">${icon("camline")}</span><span class="ends">${ends}</span></div>
        <div class="item l2 sel">${icon("right", "s")}<span class="tag lit or">${icon("tri")}</span><span class="cubename">Cube</span><span class="tag kind gr">${icon("mesh")}</span><span class="ends">${ends}</span></div>
        <div class="item l2">${icon("right", "s")}<span class="tag or">${icon("bulb")}</span><span>Light</span><span class="tag kind gr">${icon("sun")}</span><span class="ends">${ends}</span></div>
      </div></div>
    </section>`;
  }

  private listBox() {
    return html`<div class="lb">
      <div class="box">${icon("play")}${grip}</div>
      <div class="side"><button aria-label="Add">${icon("plus", "s")}</button><button class="off" aria-label="Remove">${icon("minus", "s")}</button><button class="more" aria-label="More">${icon("chev")}</button></div>
    </div>`;
  }

  private propertiesEditor() {
    const tabs: [string, [string, string, string][]][] = [
      ["t1", [["tool", "Tool", ""]]],
      ["t5", [["rendertab", "Render", ""], ["output", "Output", ""], ["layers", "View layer", ""], ["scene", "Scene", ""], ["world", "World", "red"]]],
      ["t1", [["archiveline", "Collection", ""]]],
      ["t7", [["object", "Object", "orange"], ["wrench", "Modifiers", "blue"], ["particles", "Particles", "blue"], ["physics", "Physics", "blue"], ["constraint", "Constraints", "blue"], ["mesh", "Data", "gr cur"], ["matred", "Material", "red"]]],
    ];
    return html`<section class="properties">
      <header class="row pbar">
        <div class="grp"><button class="wide" aria-label="Editor type">${icon("props")}${icon("chev", "s")}</button></div>
        <label class="field">${icon("search")}<input placeholder="Search" aria-label="Search properties" /></label>
        <div class="grp"><button aria-label="Options">${icon("chev", "s")}</button></div>
      </header>
      <div class="pbody">
        <nav class="tabs">${tabs.map(([c, g]) => html`<div class=${c}>${g.map(([i, l, k]) => html`<button class=${k} aria-label=${l}>${icon(i)}</button>`)}</div>`)}</nav>
        <div class="panels">
          <div class="row path">${icon("object")}<span>Cube</span>${icon("right", "s")}${icon("mesh")}<span>Cube.001</span>${icon("pin", "pin")}</div>
          <div class="row datablock"><button class="drop" aria-label="Browse mesh">${icon("mesh")}${icon("chev", "s")}</button><input aria-label="Mesh name" .value=${"Cube.001"} /><button class="sh" aria-label="Fake user">${icon("shield")}</button></div>
          <div class="panel"><header>${icon("chev", "s")}<span>Vertex Groups</span>${grip}</header>${this.listBox()}</div>
          <div class="panel"><header>${icon("chev", "s")}<span>Shape Keys</span>${grip}</header>${this.listBox()}
            <div class="rest"><label class="check"><input type="checkbox" />Add Rest Position</label></div></div>
          ${["UV Maps", "Color Attributes", "Attributes", "Texture Space", "Remesh", "Geometry Data", "Animation", "Custom Properties"].map((t) => html`<div class="panel"><header>${icon("right", "s")}<span>${t}</span>${grip}</header></div>`)}
        </div>
      </div>
    </section>`;
  }

  render() {
    return html`<main>${this.viewport()}${this.nodeEditor()}</main><aside>${this.outliner()}${this.propertiesEditor()}</aside>`;
  }
}
